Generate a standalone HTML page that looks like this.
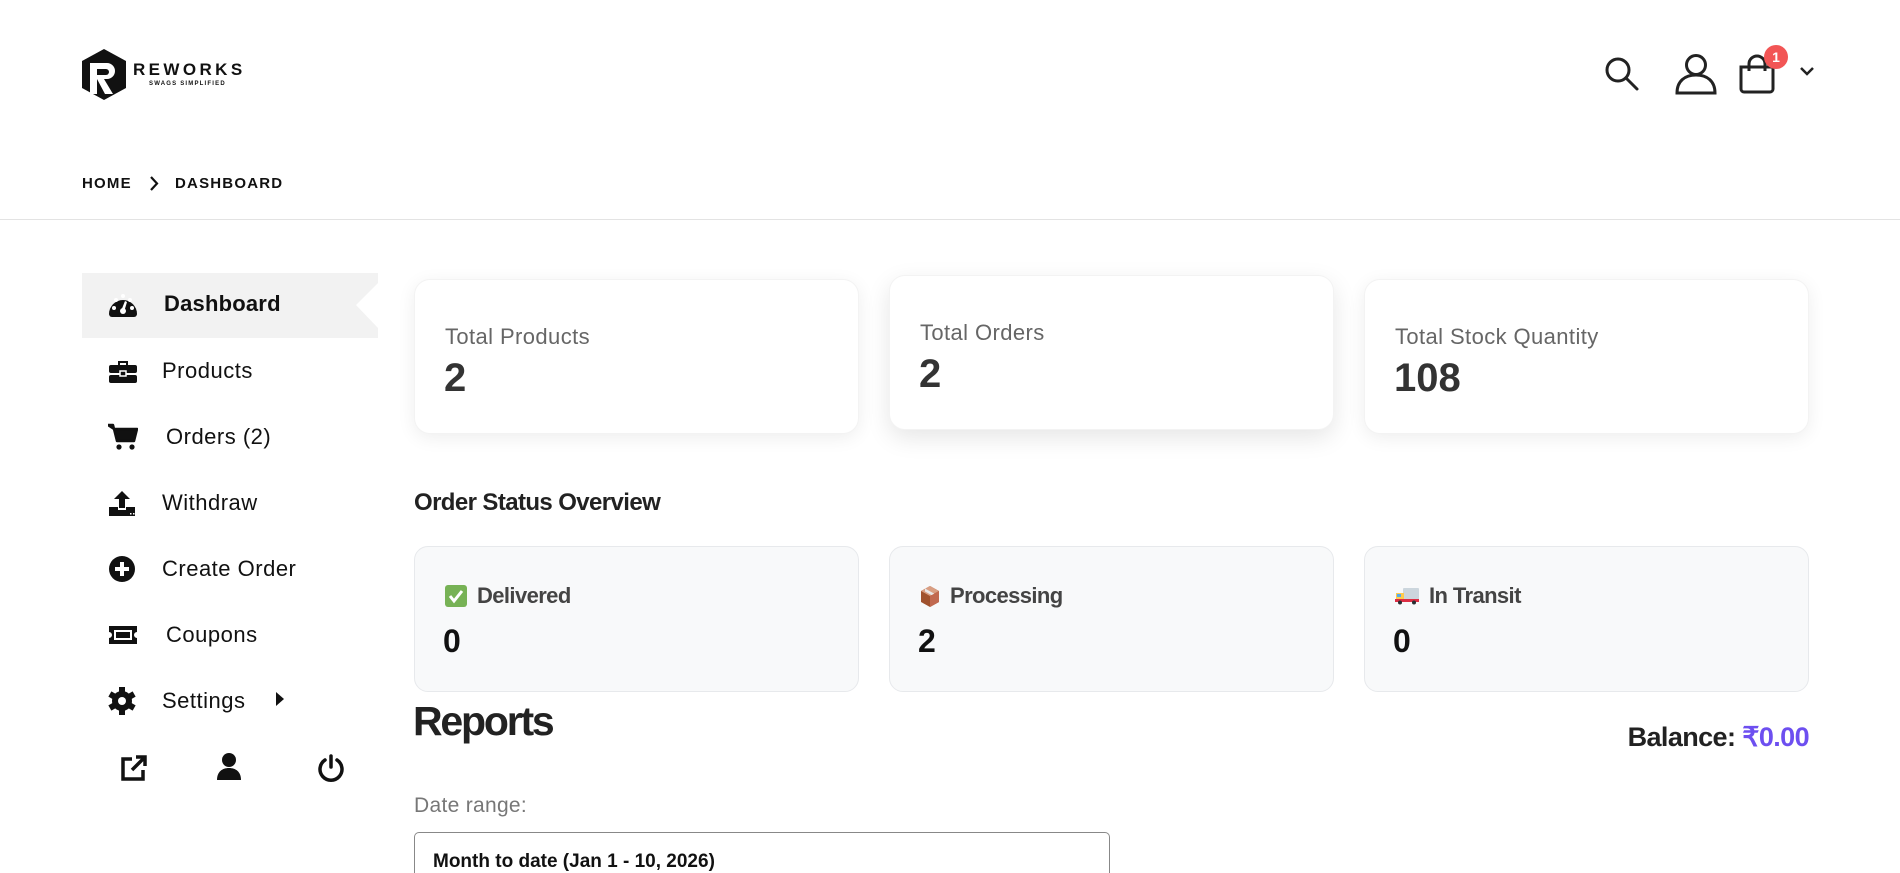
<!DOCTYPE html>
<html><head><meta charset="utf-8"><style>
*{margin:0;padding:0;box-sizing:border-box}
html{width:1900px;height:873px;overflow:hidden}
body{width:1900px;height:873px;overflow:hidden;background:#fff;font-family:"Liberation Sans",sans-serif;position:relative;color:#111}
.a{position:absolute}
.card{position:absolute;background:#fff;border-radius:16px;box-shadow:0 4px 18px rgba(0,0,0,.07);border:1px solid #f3f3f3}
.lbl{position:absolute;left:30px;font-size:22px;letter-spacing:.4px;color:#666}
.num{position:absolute;left:29px;font-size:40px;font-weight:bold;color:#333}
.sc{position:absolute;background:#f8f9fa;border:1px solid #e7e9ec;border-radius:14px;top:546px;height:146px;width:445px}
.st{position:absolute;left:30px;top:36px;font-size:22px;font-weight:bold;color:#444;letter-spacing:-.6px;display:flex;align-items:center;gap:10px}
.sn{position:absolute;left:28px;top:76px;font-size:32px;font-weight:bold;color:#111}
.mi{position:absolute;left:108px;display:flex;align-items:center;font-size:22px;letter-spacing:.5px;color:#111}
.mi svg{width:30px;height:28px}
.mi span{position:absolute;left:54px;white-space:nowrap}
</style></head><body>
<svg class="a" style="left:82px;top:49px" width="44" height="51" viewBox="0 0 44 51"><polygon points="22,0 44,12 44,39 22,51 0,39 0,12" fill="#111"/><path d="M8 14h17a8 8 0 0 1 0 16h-3l9 15h-8l-8-15v15h-7z" fill="#fff"/><path d="M15 20h9a3 3 0 0 1 0 6h-9z" fill="#111"/></svg>
<div class="a" style="left:133px;top:60px;font-size:17px;font-weight:bold;letter-spacing:3.4px;color:#111">REWORKS</div>
<div class="a" style="left:149px;top:81px;font-size:6px;font-weight:bold;letter-spacing:1.2px;color:#111">SWAGS SIMPLIFIED</div>
<svg class="a" style="left:1603px;top:55px" width="38" height="38" viewBox="0 0 38 38" fill="none" stroke="#222" stroke-width="3"><circle cx="15" cy="15" r="11"/><path d="M23 23l11 11" stroke-linecap="round"/></svg>
<svg class="a" style="left:1674px;top:53px" width="44" height="42" viewBox="0 0 44 42" fill="none" stroke="#222" stroke-width="3"><circle cx="22" cy="12" r="9.5"/><path d="M3 40c0-12 8-18 19-18s19 6 19 18z"/></svg>
<svg class="a" style="left:1737px;top:53px" width="42" height="42" viewBox="0 0 42 42" fill="none" stroke="#222" stroke-width="3"><path d="M4 14h32v22a3 3 0 0 1-3 3H7a3 3 0 0 1-3-3z"/><path d="M12 18V11a8 8 0 0 1 16 0v7"/></svg>
<div class="a" style="left:1764px;top:45px;width:24px;height:24px;border-radius:50%;background:#f25555;color:#fff;font-size:14px;font-weight:bold;text-align:center;line-height:24px">1</div>
<svg class="a" style="left:1799px;top:65px" width="16" height="12" viewBox="0 0 16 12" fill="none" stroke="#222" stroke-width="2.5"><path d="M2 3l6 6 6-6"/></svg>
<div class="a" style="left:82px;top:175px;font-size:15px;font-weight:bold;letter-spacing:1.2px;color:#111">HOME</div>
<svg class="a" style="left:148px;top:175px" width="12" height="17" viewBox="0 0 12 17" fill="none" stroke="#111" stroke-width="2.2"><path d="M3 2l6 6.5-6 6.5"/></svg>
<div class="a" style="left:175px;top:175px;font-size:15px;font-weight:bold;letter-spacing:1.2px;color:#111">DASHBOARD</div>
<div class="a" style="left:0;top:219px;width:1900px;height:1px;background:#e3e3e3"></div>
<svg class="a" style="left:82px;top:273px" width="296" height="65" viewBox="0 0 296 65"><path d="M0 0h296v10l-22 22 22 23v10H0z" fill="#f2f2f2"/></svg>
<div class="mi" style="top:290px"><svg viewBox="0 0 30 28"><path d="M1 24A14 14 0 1 1 29 24a3 3 0 0 1-3 3H4a3 3 0 0 1-3-3z" fill="#111"/><circle cx="6" cy="18" r="2" fill="#fff"/><circle cx="8" cy="10" r="2" fill="#fff"/><circle cx="15" cy="6" r="2" fill="#fff"/><circle cx="24" cy="18" r="2" fill="#fff"/><circle cx="22" cy="10" r="2" fill="#fff"/><path d="M13 21l4-10 2 1-3 10z" fill="#fff"/><circle cx="15" cy="21" r="3" fill="#fff"/></svg><span style="font-weight:bold;left:56px;letter-spacing:.2px">Dashboard</span></div>
<div class="mi" style="top:357px"><svg viewBox="0 0 30 28"><path d="M10 4h10v4h-2V6h-6v2h-2z" fill="#111"/><rect x="1" y="8" width="28" height="8" rx="2" fill="#111"/><rect x="1" y="18" width="28" height="8" rx="2" fill="#111"/><rect x="12" y="14" width="6" height="5" fill="#111" stroke="#fff" stroke-width="1.5"/></svg><span>Products</span></div>
<div class="mi" style="top:423px"><svg viewBox="0 0 30 28"><path d="M0 2h5l4 16h17l3-12H6z" fill="#111" stroke="#111" stroke-width="2.5" stroke-linejoin="round"/><circle cx="11" cy="24" r="2.6" fill="#111"/><circle cx="24" cy="24" r="2.6" fill="#111"/></svg><span style="left:58px">Orders (2)</span></div>
<div class="mi" style="top:489px"><svg viewBox="0 0 30 28"><path d="M14 2l-8 8h5v9h6v-9h5z" fill="#111"/><path d="M1 18h9v3h8v-3h9v9H1z" fill="#111"/><rect x="22" y="24" width="1.5" height="1.5" fill="#fff"/><rect x="25" y="24" width="1.5" height="1.5" fill="#fff"/></svg><span>Withdraw</span></div>
<div class="mi" style="top:555px"><svg viewBox="0 0 30 28"><circle cx="14" cy="14" r="13" fill="#111"/><path d="M14 7v14M7 14h14" stroke="#fff" stroke-width="4"/></svg><span>Create Order</span></div>
<div class="mi" style="top:621px"><svg viewBox="0 0 30 28"><path d="M1 5h28v6a3 3 0 0 0 0 6v6H1v-6a3 3 0 0 0 0-6z" fill="#111"/><rect x="6" y="9" width="18" height="10" fill="#fff"/><rect x="8" y="11" width="14" height="6" fill="#111"/></svg><span style="left:58px">Coupons</span></div>
<div class="mi" style="top:687px"><svg viewBox="0 0 30 28"><g transform="translate(14 14)"><g fill="#111"><circle r="10"/><rect x="-3" y="-14" width="6" height="28"/><rect x="-3" y="-14" width="6" height="28" transform="rotate(60)"/><rect x="-3" y="-14" width="6" height="28" transform="rotate(120)"/></g><circle r="4" fill="#fff"/></g></svg><span>Settings</span></div>
<svg class="a" style="left:275px;top:691px" width="10" height="16" viewBox="0 0 10 16"><path d="M1 1l8 7-8 7z" fill="#111"/></svg>
<svg class="a" style="left:120px;top:754px" width="28" height="28" viewBox="0 0 28 28" fill="none" stroke="#111" stroke-width="3.5"><path d="M12 5H3v20h20v-9"/><path d="M12 16L25 3M16 3h9v9"/></svg>
<svg class="a" style="left:216px;top:753px" width="26" height="28" viewBox="0 0 26 28" fill="#111"><circle cx="13" cy="7" r="7"/><path d="M1 27c0-8 5-12 12-12s12 4 12 12z"/></svg>
<svg class="a" style="left:317px;top:754px" width="28" height="28" viewBox="0 0 28 28" fill="none" stroke="#111" stroke-width="3.5" stroke-linecap="round"><path d="M8 6a11 11 0 1 0 12 0"/><path d="M14 2v11"/></svg>
<div class="card" style="left:414px;top:279px;width:445px;height:155px"><div class="lbl" style="top:44px">Total Products</div><div class="num" style="top:76px">2</div></div>
<div class="card" style="left:889px;top:275px;width:445px;height:155px;box-shadow:0 8px 24px rgba(0,0,0,.1)"><div class="lbl" style="top:44px">Total Orders</div><div class="num" style="top:76px">2</div></div>
<div class="card" style="left:1364px;top:279px;width:445px;height:155px"><div class="lbl" style="top:44px">Total Stock Quantity</div><div class="num" style="top:76px">108</div></div>
<div class="a" style="left:414px;top:489px;font-size:24px;font-weight:bold;letter-spacing:-.6px;color:#222">Order Status Overview</div>
<div class="sc" style="left:414px"><div class="st"><svg width="22" height="22" viewBox="0 0 22 22"><rect width="22" height="22" rx="3" fill="#77b255"/><path d="M5 11l4 5 8-10" fill="none" stroke="#fff" stroke-width="3"/></svg>Delivered</div><div class="sn">0</div></div>
<div class="sc" style="left:889px"><div class="st"><svg width="20" height="22" viewBox="0 0 20 22"><path d="M10 1l9 5v11l-9 5-9-5V6z" fill="#a0522d"/><path d="M10 1l9 5-9 5-9-5z" fill="#d99e82"/><path d="M5 3.5l9 5v3l-9-5z" fill="#e8e8e8"/><path d="M10 11v11l9-5V6z" fill="#c1694f"/></svg>Processing</div><div class="sn">2</div></div>
<div class="sc" style="left:1364px"><div class="st"><svg width="24" height="18" viewBox="0 0 24 18"><rect x="8" y="1" width="16" height="12" rx="1" fill="#ccd6dd"/><path d="M1 6h8v7H1z" fill="#ffcc4d"/><rect x="2" y="7" width="4" height="3" fill="#55acee"/><rect x="0" y="12" width="24" height="3" fill="#dd2e44"/><circle cx="5" cy="15.5" r="2" fill="#292f33"/><circle cx="19" cy="15.5" r="2" fill="#292f33"/></svg>In Transit</div><div class="sn">0</div></div>
<div class="a" style="left:413px;top:698px;font-size:41px;font-weight:bold;letter-spacing:-2.2px;color:#222">Reports</div>
<div class="a" style="right:91px;top:722px;font-size:27px;font-weight:bold;letter-spacing:-.6px;color:#222">Balance: <span style="color:#6d4ff0">₹0.00</span></div>
<div class="a" style="left:414px;top:794px;font-size:21px;letter-spacing:.3px;color:#777">Date range:</div>
<div class="a" style="left:414px;top:832px;width:696px;height:50px;border:1px solid #888;border-bottom:none;border-radius:5px 5px 0 0"></div>
<div class="a" style="left:433px;top:851px;font-size:19px;font-weight:bold;color:#111">Month to date (Jan 1 - 10, 2026)</div>
</body></html>
